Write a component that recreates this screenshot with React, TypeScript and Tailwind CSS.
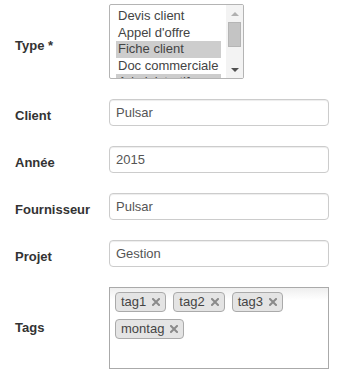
import React from "react";

const font = "font-['Liberation_Sans',Arial,Helvetica,sans-serif]";

const types = [
  { label: "Devis client", selected: false },
  { label: "Appel d'offre", selected: false },
  { label: "Fiche client", selected: true },
  { label: "Doc commerciale", selected: false },
  { label: "Administratif", selected: true },
];

const tags = ["tag1", "tag2", "tag3", "montag"];

const Label: React.FC<{ text: string; offset?: string }> = ({ text, offset = "pt-[6px]" }) => (
  <div className={`w-[109px] shrink-0 pl-[15px] text-[13px] font-bold text-[#333] ${offset}`}>{text}</div>
);

const TextField: React.FC<{ label: string; value: string }> = ({ label, value }) => (
  <div className="flex items-center">
    <Label text={label} />
    <div className="flex h-[27px] w-[220px] items-center rounded-[4px] border border-[#ccc] bg-white px-[6px] text-[13px] text-[#555] shadow-[inset_0_1px_1px_rgba(0,0,0,0.075)]">
      {value}
    </div>
  </div>
);

const TypeList: React.FC = () => (
  <div className="flex h-[75px] w-[135px] overflow-hidden rounded-[2px] border border-[#b4b4b4] bg-white">
    <div className="w-[111px] overflow-hidden pl-[6px] pt-[3px]">
      {types.map((t) => (
        <div
          key={t.label}
          className={`h-[16.6px] whitespace-nowrap pl-[2px] text-[13px] leading-[16.6px] text-[#444] ${
            t.selected ? "bg-[#cdcdcd]" : ""
          }`}
        >
          {t.label}
        </div>
      ))}
    </div>
    <div className="ml-auto flex w-[17px] flex-col items-center bg-[#f3f3f3]">
      <div className="flex h-[17px] items-center justify-center">
        <div className="h-0 w-0 border-x-[4px] border-b-[4px] border-x-transparent border-b-[#b0b0b0]" />
      </div>
      <div className="h-[25px] w-[13px] border border-[#b5b5b5] bg-[#c4c4c4]" />
      <div className="flex-1" />
      <div className="flex h-[17px] items-center justify-center">
        <div className="h-0 w-0 border-x-[4px] border-t-[4px] border-x-transparent border-t-[#505050]" />
      </div>
    </div>
  </div>
);

const Tag: React.FC<{ text: string }> = ({ text }) => (
  <div className="flex h-[20px] items-center gap-[6px] rounded-[4px] border border-[#aaa] bg-[#e4e4e4] pl-[5px] pr-[5px] text-[13px] text-[#444]">
    <span>{text}</span>
    <svg width="8" height="8" viewBox="0 0 8 8">
      <path d="M1 1L7 7M7 1L1 7" stroke="#8a8a8a" strokeWidth="2" strokeLinecap="square" />
    </svg>
  </div>
);

export default function App() {
  return (
    <div className={`h-[378px] w-[356px] bg-white pt-[4px] ${font}`}>
      <div className="flex flex-col gap-[20px]">
        <div className="flex items-center">
          <Label text="Type *" offset="pt-[9px]" />
          <TypeList />
        </div>
        <TextField label="Client" value="Pulsar" />
        <TextField label="Année" value="2015" />
        <TextField label="Fournisseur" value="Pulsar" />
        <TextField label="Projet" value="Gestion" />
        <div className="flex items-center">
          <Label text="Tags" offset="pt-0" />
          <div className="flex h-[82px] w-[220px] flex-wrap content-start gap-[7px] border border-[#aaa] bg-gradient-to-t from-white from-85% to-[#eee] pl-[5px] pt-[4px]">
            {tags.map((t) => (
              <Tag key={t} text={t} />
            ))}
          </div>
        </div>
      </div>
    </div>
  );
}
